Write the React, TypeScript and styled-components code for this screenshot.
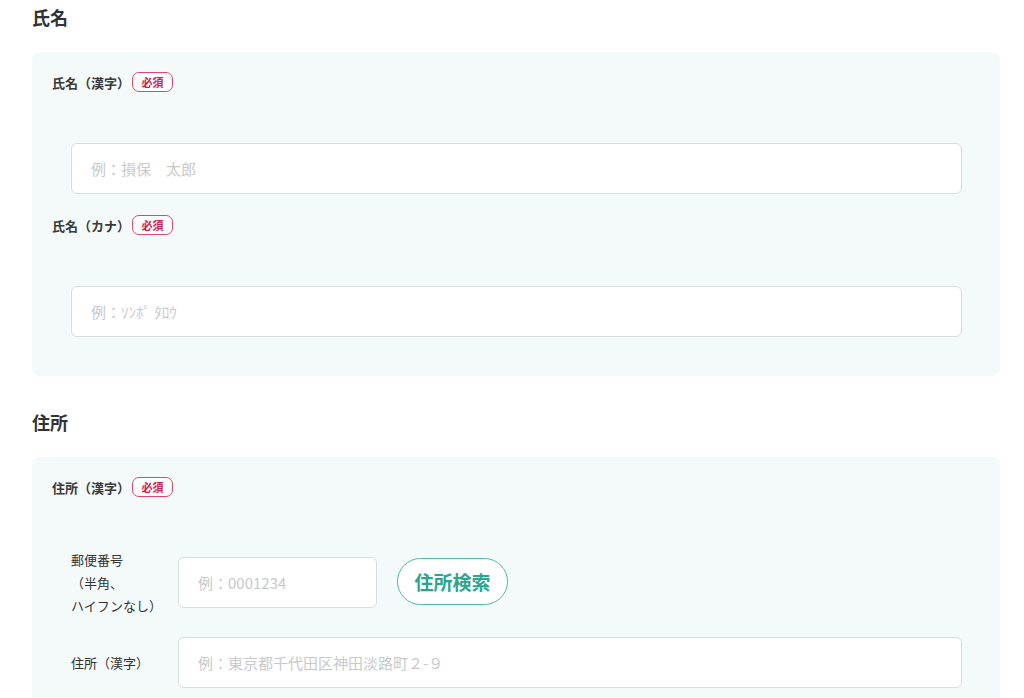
import React from "react";
import styled, { createGlobalStyle } from "styled-components";

const GlobalStyle = createGlobalStyle`
  html, body { margin: 0; padding: 0; background: #ffffff; }
  body {
    font-family: "Noto Sans CJK JP", "Noto Sans", sans-serif;
    color: #333333;
  }
  * { box-sizing: border-box; }
`;

const Page = styled.div`
  padding: 4px 24px 0 32px;
  display: flex;
  flex-direction: column;
`;

const Section = styled.section`
  display: flex;
  flex-direction: column;
  & + & { margin-top: 33px; }
`;

const Heading = styled.h2`
  margin: 0 0 22px;
  font-size: 18px;
  line-height: 26px;
  font-weight: 700;
  color: #333;
`;

const Card = styled.div`
  background: #f4f9f9;
  border-radius: 8px;
  padding: 20px 20px 39px 20px;
  display: flex;
  flex-direction: column;
  gap: 21px;
`;

const Field = styled.div`
  display: flex;
  flex-direction: column;
`;

const LabelRow = styled.div`
  display: flex;
  align-items: center;
  gap: 2px;
  height: 20px;
`;

const Label = styled.span`
  font-size: 13px;
  font-weight: 700;
  color: #3a3a3a;
`;

const Badge = styled.span`
  display: inline-flex;
  align-items: center;
  justify-content: center;
  width: 41px;
  height: 20px;
  border: 1px solid #e0456e;
  border-radius: 7px;
  color: #d6184f;
  font-size: 11px;
  font-weight: 700;
  background: #fff;
`;

const Body = styled.div`
  margin-top: 51px;
  padding: 0 18px 0 19px;
  display: flex;
  flex-direction: column;
  gap: 20px;
`;

const Input = styled.input<{ $w?: number }>`
  display: block;
  width: ${(p) => (p.$w ? `${p.$w}px` : "100%")};
  flex: ${(p) => (p.$w ? "0 0 auto" : "1 1 auto")};
  height: 51px;
  border: 1px solid #dcdcdc;
  border-radius: 6px;
  background: #fff;
  padding: 0 19px;
  font-family: inherit;
  font-size: 15px;
  color: #333;
  outline: none;
  &::placeholder { color: #c9c9c9; }
`;

const Row = styled.div`
  display: flex;
  align-items: center;
`;

const RowLabel = styled.div`
  width: 107px;
  flex: 0 0 107px;
  font-size: 13px;
  line-height: 23px;
  color: #333;
`;

const SearchButton = styled.button`
  margin-left: 20px;
  margin-top: -3px;
  width: 111px;
  height: 47px;
  border: 1px solid #4dbba7;
  border-radius: 24px;
  background: #fff;
  color: #2ba58e;
  font-family: inherit;
  font-size: 19px;
  font-weight: 700;
  padding: 0;
  cursor: pointer;
`;

export default function App() {
  return (
    <>
      <GlobalStyle />
      <Page>
        <Section>
          <Heading>氏名</Heading>
          <Card>
            <Field>
              <LabelRow>
                <Label>氏名（漢字）</Label>
                <Badge>必須</Badge>
              </LabelRow>
              <Body>
                <Input placeholder="例：損保　太郎" />
              </Body>
            </Field>
            <Field>
              <LabelRow>
                <Label>氏名（カナ）</Label>
                <Badge>必須</Badge>
              </LabelRow>
              <Body>
                <Input placeholder="例：ｿﾝﾎﾟ ﾀﾛｳ" />
              </Body>
            </Field>
          </Card>
        </Section>
        <Section>
          <Heading>住所</Heading>
          <Card>
            <Field>
              <LabelRow>
                <Label>住所（漢字）</Label>
                <Badge>必須</Badge>
              </LabelRow>
              <Body>
                <Row>
                  <RowLabel>
                    郵便番号
                    <br />
                    （半角、
                    <br />
                    ハイフンなし）
                  </RowLabel>
                  <Input $w={199} placeholder="例：0001234" />
                  <SearchButton>住所検索</SearchButton>
                </Row>
                <Row>
                  <RowLabel>住所（漢字）</RowLabel>
                  <Input placeholder="例：東京都千代田区神田淡路町２-９" />
                </Row>
              </Body>
            </Field>
          </Card>
        </Section>
      </Page>
    </>
  );
}
